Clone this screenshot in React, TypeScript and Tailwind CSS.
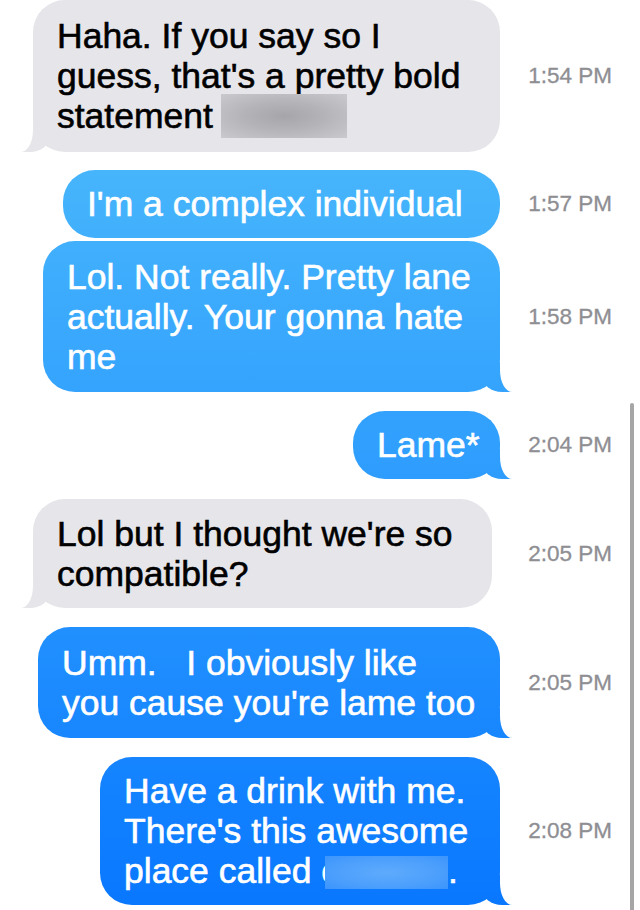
import React from 'react';

const BLUE = 'bg-fixed bg-linear-to-b from-[#54c2fa] to-[#0877ff]';

type Msg = {
  me: boolean;
  time: string;
  gap: string;
  box: string;
  lines: React.ReactNode[];
  tail: boolean;
};

const GrayBlur = () => (
  <span className="inline-block align-top h-[44px] w-[126px] -my-[2px] ml-[-2px] bg-[radial-gradient(ellipse_at_center,#a5a5aa_0%,#b3b3b8_45%,#c9c9ce_100%)]" />
);

const BlueBlur = () => (
  <span className="inline-block align-top h-[33px] w-[123px] mt-[5px] ml-[-14px] bg-[radial-gradient(ellipse_at_center,#5eabfd_0%,#4c9ffc_60%,#3c95fc_100%)]" />
);

const messages: Msg[] = [
  {
    me: false,
    time: '1:54 PM',
    gap: 'mt-0',
    box: 'ml-[33px] w-[467px] h-[152px]',
    lines: [
      'Haha. If you say so I',
      "guess, that's a pretty bold",
      <>statement <GrayBlur /></>,
    ],
    tail: true,
  },
  {
    me: true,
    time: '1:57 PM',
    gap: 'mt-[18px]',
    box: 'w-[437px] h-[68px]',
    lines: ["I'm a complex individual"],
    tail: false,
  },
  {
    me: true,
    time: '1:58 PM',
    gap: 'mt-[3px]',
    box: 'w-[457px] h-[151px]',
    lines: ['Lol. Not really. Pretty lane', 'actually. Your gonna hate', 'me'],
    tail: true,
  },
  {
    me: true,
    time: '2:04 PM',
    gap: 'mt-[19px]',
    box: 'w-[147px] h-[68px]',
    lines: ['Lame*'],
    tail: true,
  },
  {
    me: false,
    time: '2:05 PM',
    gap: 'mt-[20px]',
    box: 'ml-[33px] w-[459px] h-[109px]',
    lines: ["Lol but I thought we're so", 'compatible?'],
    tail: true,
  },
  {
    me: true,
    time: '2:05 PM',
    gap: 'mt-[19px]',
    box: 'w-[462px] h-[111px]',
    lines: ['Umm.   I obviously like', "you cause you're lame too"],
    tail: true,
  },
  {
    me: true,
    time: '2:08 PM',
    gap: 'mt-[19px]',
    box: 'w-[400px] h-[148px]',
    lines: [
      'Have a drink with me.',
      "There's this awesome",
      <>place called c<BlueBlur />.</>,
    ],
    tail: true,
  },
];

const Bubble: React.FC<{ msg: Msg }> = ({ msg }) => {
  if (msg.me) {
    return (
      <div className={`relative ml-auto mr-[12px] rounded-[32px] pl-[24px] flex flex-col justify-center text-white ${BLUE} ${msg.box}`}>
        {msg.lines.map((l, i) => (
          <div key={i} className="whitespace-pre leading-[40px] [-webkit-text-stroke:0.6px_currentColor]">{l}</div>
        ))}
        {msg.tail && (
          <>
            <div className={`absolute bottom-0 right-[-12px] h-[30px] w-[30px] rounded-bl-[20px_16px] ${BLUE}`} />
            <div className="absolute bottom-0 right-[-14px] h-[30px] w-[14px] rounded-bl-[12px_22px] bg-white" />
          </>
        )}
      </div>
    );
  }
  return (
    <div className={`relative rounded-[32px] pl-[24px] flex flex-col justify-center text-black bg-[#e5e5ea] ${msg.box}`}>
      {msg.lines.map((l, i) => (
        <div key={i} className="whitespace-pre leading-[40px] [-webkit-text-stroke:0.6px_currentColor]">{l}</div>
      ))}
      {msg.tail && (
        <>
          <div className="absolute bottom-0 left-[-13px] h-[30px] w-[30px] rounded-br-[20px_16px] bg-[#e5e5ea]" />
          <div className="absolute bottom-0 left-[-14px] h-[30px] w-[14px] rounded-br-[12px_22px] bg-white" />
        </>
      )}
    </div>
  );
};

export default function App() {
  return (
    <div className="relative w-[640px] h-[910px] overflow-hidden bg-white font-['Liberation_Sans',Arial,sans-serif] text-[35.5px]">
      {messages.map((m, i) => (
        <div key={i} className={`flex items-center ${m.gap}`}>
          <div className="w-[512px] shrink-0 flex">
            <Bubble msg={m} />
          </div>
          <div className="flex-1 text-right pr-[28px] text-[22.5px] text-[#8e8e93] [-webkit-text-stroke:0.3px_currentColor]">{m.time}</div>
        </div>
      ))}

      {/* scroll indicator */}
      <div className="absolute right-[6px] top-[403px] w-[4px] h-[520px] rounded-full bg-[#a6a6a6]" />
    </div>
  );
}
